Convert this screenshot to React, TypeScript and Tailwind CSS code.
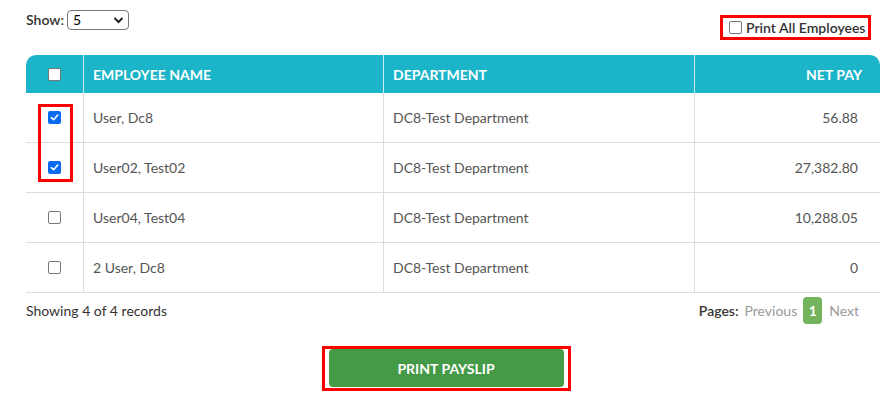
import React from "react";

const rows = [
  { checked: true, name: "User, Dc8", dept: "DC8-Test Department", pay: "56.88" },
  { checked: true, name: "User02, Test02", dept: "DC8-Test Department", pay: "27,382.80" },
  { checked: false, name: "User04, Test04", dept: "DC8-Test Department", pay: "10,288.05" },
  { checked: false, name: "2 User, Dc8", dept: "DC8-Test Department", pay: "0" },
];

function Box({ checked }: { checked: boolean }) {
  return checked ? (
    <span className="inline-flex h-[13px] w-[13px] items-center justify-center rounded-[2px] bg-[#0b6bf0]">
      <svg width="9" height="9" viewBox="0 0 10 10">
        <path d="M1.5 5.2 L4 7.5 L8.6 2.3" stroke="white" strokeWidth="1.8" fill="none" strokeLinecap="round" strokeLinejoin="round" />
      </svg>
    </span>
  ) : (
    <span className="inline-block h-[13px] w-[13px] rounded-[2px] border border-[#767676] bg-white" />
  );
}

export default function App() {
  return (
    <div className="h-[411px] w-[891px] bg-white pl-[26px] pr-[11px] text-[#555]" style={{ fontFamily: "Lato, 'Noto Sans', sans-serif" }}>
      <div className="flex h-[55px] justify-between">
        <div className="flex h-[39px] items-center gap-[3px]">
          <span className="text-[14px] font-semibold text-[#333]">Show:</span>
          <div className="flex h-[20px] w-[62px] items-center justify-between rounded-[4px] border border-[#767676] pl-[5px] pr-[4px] text-[14px] text-black">
            <span>5</span>
            <svg width="11" height="8" viewBox="0 0 11 8">
              <path d="M1.5 2 L5.5 6 L9.5 2" stroke="#222" strokeWidth="2" fill="none" />
            </svg>
          </div>
        </div>
        <div className="flex items-start pt-[15px] pr-[9px]">
          <div className="flex h-[25px] w-[151px] items-center gap-[4px] border-[3px] border-[#f00] pl-[6px]">
            <Box checked={false} />
            <span className="text-[14px] font-semibold text-[#333]">Print All Employees</span>
          </div>
        </div>
      </div>

      <div className="relative w-[854px]">
        <div className="grid h-[38px] grid-cols-[58px_300px_311px_185px] rounded-t-[10px] bg-[#1bb4c8] text-[14px] font-bold uppercase text-white">
          <div className="flex items-center justify-center border-r border-[#c9edf2]">
            <Box checked={false} />
          </div>
          <div className="flex items-center border-r border-[#c9edf2] pl-[9px]">Employee Name</div>
          <div className="flex items-center border-r border-[#c9edf2] pl-[9px]">Department</div>
          <div className="flex items-center justify-end pr-[18px]">Net Pay</div>
        </div>
        {rows.map((r, i) => (
          <div key={i} className="grid h-[50px] grid-cols-[58px_300px_311px_185px] border-b border-[#dcdcdc] text-[14px]">
            <div className="flex items-center justify-center border-r border-[#dcdcdc]">
              <Box checked={r.checked} />
            </div>
            <div className="flex items-center border-r border-[#dcdcdc] pl-[9px]">{r.name}</div>
            <div className="flex items-center border-r border-[#dcdcdc] pl-[9px]">{r.dept}</div>
            <div className="flex items-center justify-end pr-[22px]">{r.pay}</div>
          </div>
        ))}
        <div className="pointer-events-none absolute left-[12px] top-[49px] h-[78px] w-[35px] border-[3px] border-[#f00]" />
        <div className="flex h-[34px] items-center justify-between text-[14px]">
          <span className="text-[#333]">Showing 4 of 4 records</span>
          <div className="flex items-center">
            <span className="font-semibold text-[#333]">Pages:</span>
            <span className="ml-[6px] text-[#9a9a9a]">Previous</span>
            <span className="ml-[6px] flex h-[27px] w-[19px] items-center justify-center rounded-[4px] bg-[#72b35b] font-bold text-white">1</span>
            <span className="ml-[7px] mr-[21px] text-[#9a9a9a]">Next</span>
          </div>
        </div>
      </div>

      <div className="mt-[19px] flex justify-center pr-[14px]">
        <div className="border-[3px] border-[#f00] px-[4px] pb-[1px] pt-[0px]">
          <button className="flex h-[38px] w-[235px] items-center justify-center rounded-[4px] bg-[#449a47] text-[14px] font-bold uppercase text-white">
            Print Payslip
          </button>
        </div>
      </div>
    </div>
  );
}
